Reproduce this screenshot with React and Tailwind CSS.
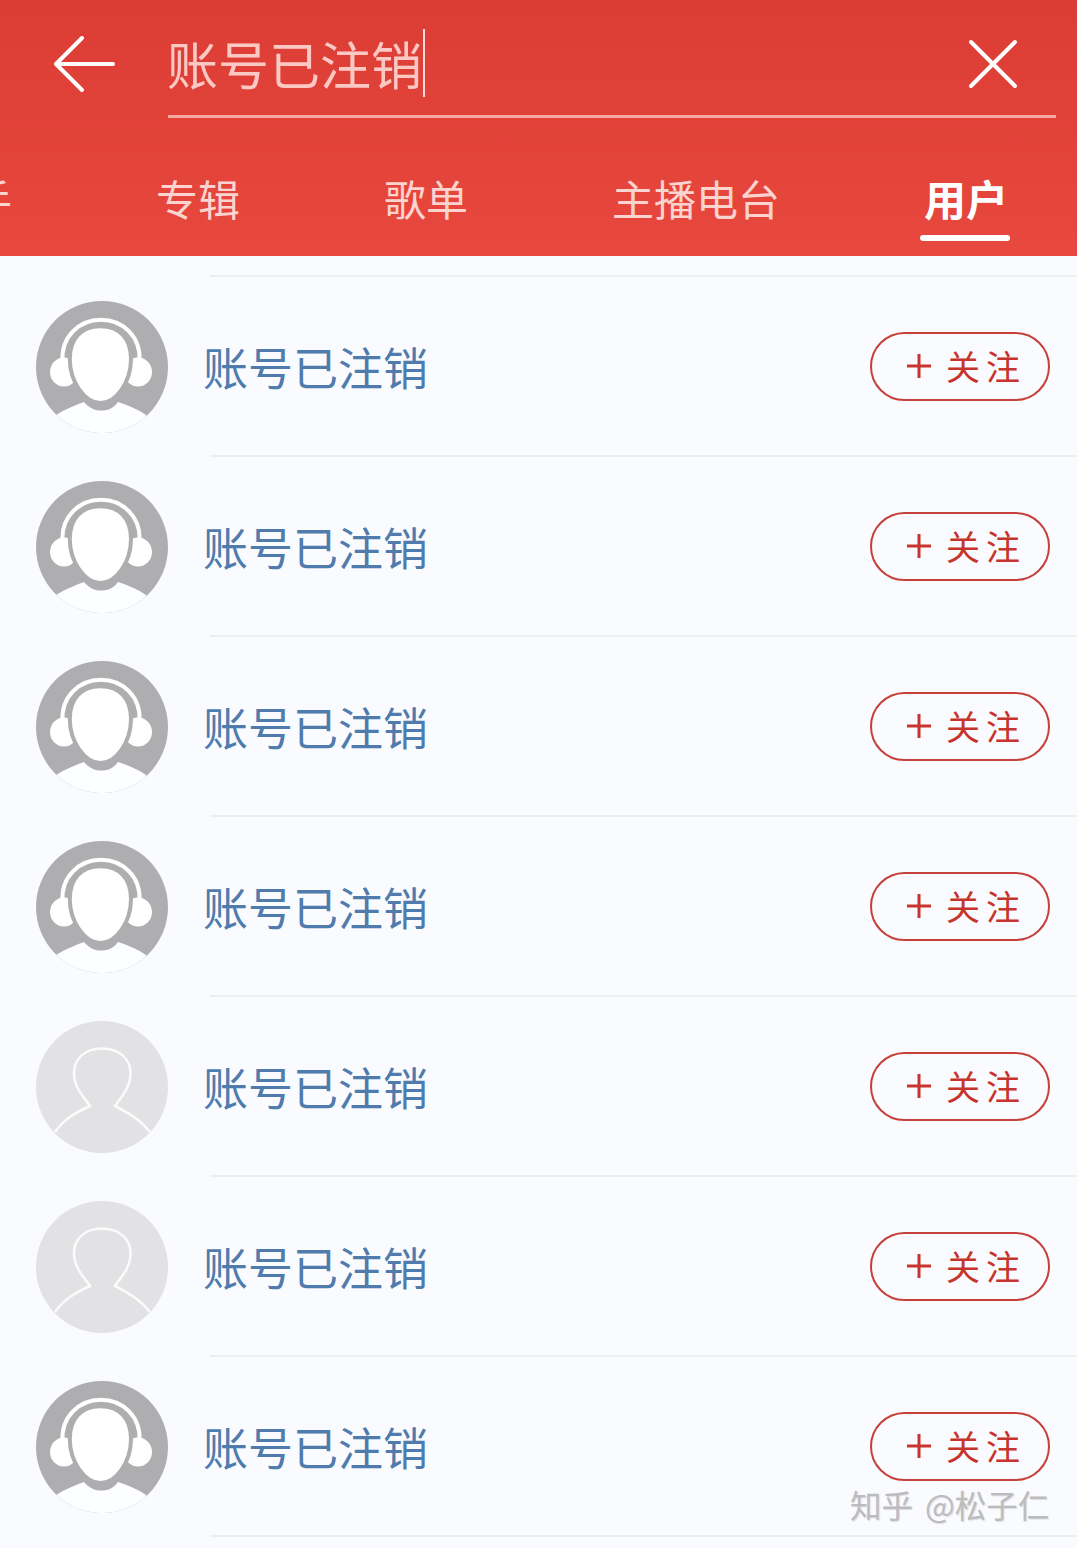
const cjk = "font-['Noto_Sans_CJK_SC','Noto_Sans_CJK_JP',sans-serif]";

const rows = ["hp", "hp", "hp", "hp", "person", "person", "hp"];
const tabs = ["专辑", "歌单", "主播电台"];

function HeadphoneAvatar() {
  return (
    <svg width="132" height="132" viewBox="0 0 132 132" className="shrink-0">
      <defs>
        <clipPath id="hp-clip">
          <circle cx="66" cy="66" r="66" />
        </clipPath>
      </defs>
      <circle cx="66" cy="66" r="66" fill="#aeaeb0" />
      <path
        d="M20 114C30 108 39 104 48 101C54 108 60 109.500 65 109.500C71 109.500 77 108 82 101C92 104 101 108 110 114L110 132L20 132Z"
        fill="#fdfeff"
        clipPath="url(#hp-clip)"
      />
      <path
        d="M26.500 60C25 36 43 18.800 65 18.800C87 18.800 105 36 103.500 60"
        fill="none"
        stroke="#ffffff"
        strokeWidth="4"
      />
      <ellipse cx="28" cy="71" rx="14" ry="14.500" fill="#ffffff" />
      <ellipse cx="102" cy="71" rx="14" ry="14.500" fill="#ffffff" />
      <path
        d="M64.500 25.200C84 25.200 95 38 95 58C95 81 80 102 64.500 102C49 102 33.800 81 33.800 58C33.800 38 45 25.200 64.500 25.200Z"
        fill="#ffffff"
        stroke="#aeaeb0"
        strokeWidth="4"
      />
    </svg>
  );
}

function PersonAvatar() {
  return (
    <svg width="132" height="132" viewBox="0 0 132 132" className="shrink-0">
      <circle cx="66" cy="66" r="66" fill="#e2e2e4" />
      <path
        d="M19 111C28 98 39 92 54 85C48 76 38 67 38 52C38 37 50 27.500 66 27.500C82 27.500 94.500 37 94.500 52C94.500 67 85 76 79 85C92 92 104 98 114 111"
        fill="none"
        stroke="#fbfbfc"
        strokeWidth="2.500"
      />
    </svg>
  );
}

function UserRow({ kind }) {
  return (
    <div className="h-[180px] flex items-center pl-[36px] pr-[27px]">
      {kind === "hp" ? <HeadphoneAvatar /> : <PersonAvatar />}
      <div className="flex-1 h-full ml-[42px] flex items-center border-b-2 border-[#eceef0] -mr-[27px] pr-[27px]">
        <span className="text-[45px] leading-none text-[#4f7cad] -ml-[7px]">账号已注销</span>
        <button className="ml-auto w-[180px] h-[69px] rounded-full border-2 border-[#c5403a] flex items-center pl-[34px] text-[#c5352d]">
          <svg width="26" height="26" viewBox="0 0 26 26" className="mr-[14px] shrink-0">
            <path d="M13 1V25M1 13H25" stroke="#c5352d" strokeWidth="3" />
          </svg>
          <span className="text-[34px] leading-none tracking-[6px] whitespace-nowrap">关注</span>
        </button>
      </div>
    </div>
  );
}

export default function App() {
  return (
    <div className={`relative w-[1077px] h-[1548px] overflow-hidden bg-[#fafbfe] ${cjk}`}>
      <header className="h-[256px] bg-gradient-to-b from-[#db3c34] to-[#e8483d] overflow-hidden">
        <div className="h-[118px] flex pl-[53px] pr-[21px]">
          <svg width="62" height="56" viewBox="0 0 62 56" className="mt-[36px] shrink-0">
            <path
              d="M60 28H3M29 2L3 28L29 54"
              fill="none"
              stroke="#ffffff"
              strokeWidth="4"
              strokeLinecap="round"
              strokeLinejoin="round"
            />
          </svg>
          <div className="flex-1 ml-[53px] flex border-b-[3px] border-[#f6aaa4]">
            <div className="mt-[29px] h-[68px] flex items-center">
              <span className="text-[51px] leading-none text-[#fbc8c3] -ml-[1px]">账号已注销</span>
              <span className="w-[2px] h-[68px] bg-[#fbdad7] ml-[1px]"></span>
            </div>
            <svg width="50" height="50" viewBox="0 0 50 50" className="ml-auto mr-[38px] mt-[39px]">
              <path
                d="M3 3L47 47M47 3L3 47"
                fill="none"
                stroke="#ffffff"
                strokeWidth="4"
                strokeLinecap="round"
              />
            </svg>
          </div>
        </div>
        <div className="flex items-start gap-[144px] -ml-[72px] mt-[55px] text-[42px] leading-[50px] text-[#fbd3cf]">
          <span>歌手</span>
          {tabs.map((t) => (
            <span key={t}>{t}</span>
          ))}
          <div className="relative text-white font-bold">
            用户
            <div className="absolute left-[-4px] right-[-2px] top-[62px] h-[6px] rounded-full bg-white"></div>
          </div>
        </div>
      </header>

      <div className="h-[21px] border-b-2 border-[#eceef0] ml-[210px]"></div>
      {rows.map((kind, i) => (
        <UserRow key={i} kind={kind} />
      ))}

      <div className="absolute left-[850px] top-[1484px] text-[31.5px] leading-[40px] [word-spacing:5px] text-[#bcbcbe] [text-shadow:1px_1px_1px_#8884]">
        知乎 @松子仁
      </div>
    </div>
  );
}
